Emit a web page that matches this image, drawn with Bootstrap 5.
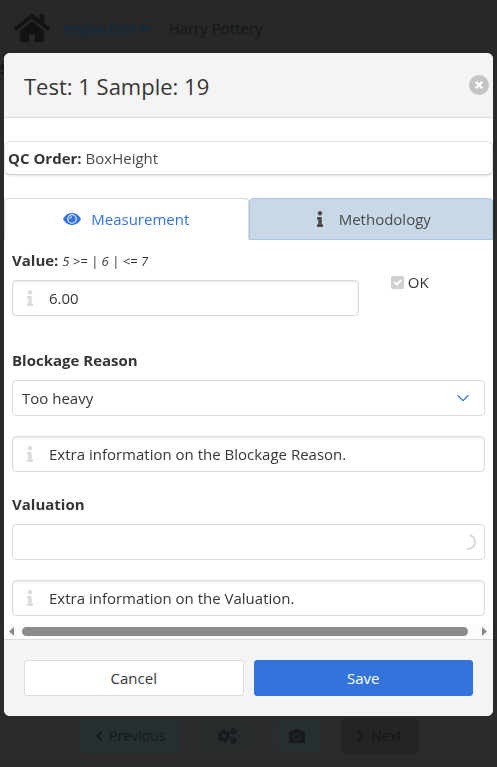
<!DOCTYPE html>
<html lang="en">
<head>
<meta charset="utf-8">
<meta name="viewport" content="width=device-width, initial-scale=1">
<title>Inspection</title>
<link href="https://cdn.jsdelivr.net/npm/bootstrap@5.3.0/dist/css/bootstrap.min.css" rel="stylesheet">
<style>
  body { font-family: "Open Sans", "Noto Sans", sans-serif; font-size: 15px; line-height: 24px; color: #363636; background: #2b2b2b; }
  svg { display: block; flex: none; }
  /* dimmed page behind the dialog */
  .page { min-height: 100vh; overflow: hidden; color: #151515; }
  .topbar { height: 56px; background: #262829; gap: 13px; padding: 0 14px; color: #121414; }
  .topbar a { color: #0d2a42; }
  .topbar .user { color: #151617; margin-left: 6px; }
  .sample-head { height: 26px; background: #262829; }
  .actions { gap: 20px; padding: 13px 0; }
  .actions button { height: 36px; border: 0; border-radius: 4px; font-size: 14px; background: #272e30; color: #151a1c; padding: 0 16px; gap: 6px; }
  .actions .go-next { background: #242424; color: #161616; }
  .actions .tool { height: 32px; }
  .actions .gears { background: #282b2b; }
  /* dialog */
  .modal-dialog { margin: 53px 4px; max-width: none; }
  .modal-content { border: 0; border-radius: 6px; overflow: hidden; color: #363636; }
  .modal-header { background: #f4f4f4; border-bottom: 1px solid #dbdbdb; height: 65px; padding: 0 4px 0 20px; border-radius: 0; }
  .modal-title { font-size: 22px; line-height: 32px; font-weight: 400; padding-top: 2px; }
  .closer { width: 20px; height: 20px; border: 0; border-radius: 50%; background: #c4c4c4; color: #fff; }
  .modal-body { padding: 23px 0 0; }
  .order-box { border: 1px solid #e2e2e2; border-bottom-color: #cfcfcf; border-radius: 6px; box-shadow: 0 1px 3px rgba(10,10,10,.12); height: 34px; padding: 0 3px; margin-bottom: 23px; color: #4a4a4a; }
  .order-box strong { color: #363636; }
  .nav-tabs { border: 0; }
  .nav-tabs .nav-link { height: 42px; margin: 0; padding: 0; gap: 10px; border: 1px solid #dbdbdb; border-bottom-color: transparent; border-radius: 4px 4px 0 0; color: #3273dc; }
  .nav-tabs .nav-link.active { color: #3273dc; border-color: #dbdbdb #dbdbdb transparent; }
  .nav-tabs .other, .nav-tabs .other:hover { background: #c8d8e7; border-color: #a9c6e2; color: #4a4a4a; }
  .pane { padding: 8px 8px; }
  .field-label { font-weight: 700; height: 24px; margin: 0 0 8px; display: block; }
  .range { font-size: 13px; font-weight: 400; }
  .icon-field, .pick { position: relative; }
  .icon-field svg { position: absolute; left: 14px; top: 10px; color: #dbdbdb; }
  .icon-field .form-control { padding: 0 10px 0 36px; box-shadow: inset 0 1px 2px rgba(10,10,10,.1); }
  .form-control, .form-select { height: 36px; font-size: 15px; line-height: 24px; border: 1px solid #dbdbdb; border-radius: 4px; color: #363636; background-color: #fff; }
  .form-select, .form-select:disabled { padding: 0 32px 0 9px; background: #fff; }
  .pick svg { position: absolute; right: 16px; top: 12px; pointer-events: none; }
  .pick .loader { right: 9px; top: 10px; }
  .ok-col { width: 25%; padding-left: 24px; padding-top: 22px; }
  .form-check-input.ok { width: 13px; height: 13px; margin: 0; border: 0; border-radius: 2px; background-color: #cfcfcf; opacity: 1; }
  .form-check-input.ok:disabled ~ label { opacity: 1; }
  .scroller { height: 15px; background: #fcfcfc; padding: 0 6px 0 5px; color: #8b8b8b; }
  .scroller .thumb { height: 9px; border-radius: 5px; background: #8b8b8b; margin: 0 14px 0 8px; }
  .modal-footer { background: #f4f4f4; border-top: 1px solid #dbdbdb; padding: 20px; gap: 10px; border-radius: 0; }
  .modal-footer .btn { height: 36px; padding: 0; margin: 0; border-radius: 3px; font-size: 15px; line-height: 24px; flex: 1 1 0; }
  .btn-plain, .btn-plain:hover { background: #fff; border-color: #dbdbdb; color: #363636; }
  .btn-save, .btn-save:hover { background: #3273dc; border-color: #3273dc; color: #fff; }
</style>
</head>
<body>
<svg class="d-none" aria-hidden="true">
  <symbol id="info" viewBox="0 0 192 512"><path fill="currentColor" d="M20 424.229h20V279.771H20c-11.046 0-20-8.954-20-20V212c0-11.046 8.954-20 20-20h112c11.046 0 20 8.954 20 20v212.229h20c11.046 0 20 8.954 20 20V492c0 11.046-8.954 20-20 20H20c-11.046 0-20-8.954-20-20v-47.771c0-11.046 8.954-20 20-20zM96 0C56.235 0 24 32.235 24 72s32.235 72 72 72 72-32.235 72-72S135.764 0 96 0z"/></symbol>
</svg>

<div class="page d-flex flex-column">
  <nav class="topbar d-flex align-items-center">
    <svg width="36" height="32" viewBox="0 0 576 512" fill="currentColor" aria-hidden="true"><path d="M280.37 148.26L96 300.11V464a16 16 0 0 0 16 16l112.06-.29a16 16 0 0 0 15.92-16V368a16 16 0 0 1 16-16h64a16 16 0 0 1 16 16v95.64a16 16 0 0 0 16 16.05L464 480a16 16 0 0 0 16-16V300L295.67 148.26a12.19 12.19 0 0 0-15.3 0zM571.6 251.47L488 182.56V44.05a12 12 0 0 0-12-12h-56a12 12 0 0 0-12 12v72.61L318.47 43a48 48 0 0 0-61 0L4.34 251.47a12 12 0 0 0-1.6 16.9l25.5 31A12 12 0 0 0 45.15 301l235.22-193.74a12.19 12.19 0 0 1 15.3 0L530.9 301a12 12 0 0 0 16.9-1.6l25.5-31a12 12 0 0 0-1.7-16.93z"/></svg>
    <a href="#" class="d-flex align-items-center text-decoration-none gap-1">Inspection
      <svg width="10" height="8" viewBox="0 0 10 8" fill="none" stroke="currentColor" stroke-width="2.4" stroke-linecap="round" stroke-linejoin="round" aria-hidden="true"><path d="M1.4 2 5 5.6 8.6 2"/></svg></a>
    <span class="user">Harry Pottery</span>
  </nav>
  <div class="sample-head fw-bold">S</div>
  <div class="flex-grow-1"></div>
  <div class="actions d-flex justify-content-center align-items-center">
    <button type="button" class="d-flex align-items-center"><svg width="8" height="12" viewBox="0 0 8 12" fill="none" stroke="currentColor" stroke-width="2.4" aria-hidden="true"><path d="M6.8 1.5 2.2 6l4.6 4.5"/></svg>Previous</button>
    <button type="button" class="tool gears d-flex align-items-center" aria-label="Settings"><svg width="20" height="16" viewBox="0 0 20 16" fill="none" stroke="currentColor" aria-hidden="true"><circle cx="7" cy="8" r="3.6" stroke-width="3"/><circle cx="7" cy="8" r="5.8" stroke-width="2" stroke-dasharray="3 3.07"/><circle cx="16.5" cy="3.4" r="1.9" stroke-width="1.6"/><circle cx="16.5" cy="3.4" r="2.9" stroke-width="1" stroke-dasharray="1.5 1.54"/><circle cx="16.5" cy="12.6" r="1.9" stroke-width="1.6"/><circle cx="16.5" cy="12.6" r="2.9" stroke-width="1" stroke-dasharray="1.5 1.54"/></svg></button>
    <button type="button" class="tool d-flex align-items-center" aria-label="Camera"><svg width="16" height="14" viewBox="0 0 16 14" aria-hidden="true"><path fill="currentColor" fill-rule="evenodd" d="M1.5 2h3l.6-1.4A1 1 0 0 1 6 0h4a1 1 0 0 1 .9.6L11.5 2h3A1.5 1.5 0 0 1 16 3.5v9a1.5 1.5 0 0 1-1.5 1.5h-13A1.5 1.5 0 0 1 0 12.5v-9A1.5 1.5 0 0 1 1.5 2zM8 4a3.8 3.8 0 1 0 0 7.6A3.8 3.8 0 0 0 8 4zm0 1.1a2.7 2.7 0 1 1 0 5.4 2.7 2.7 0 0 1 0-5.4z"/></svg></button>
    <button type="button" class="go-next d-flex align-items-center"><svg width="8" height="12" viewBox="0 0 8 12" fill="none" stroke="currentColor" stroke-width="2.4" aria-hidden="true"><path d="M1.2 1.5 5.8 6l-4.6 4.5"/></svg>Next</button>
  </div>
</div>

<div class="modal d-block" role="dialog" aria-modal="true" aria-labelledby="dialog-title">
  <div class="modal-dialog">
    <form class="modal-content">
      <div class="modal-header">
        <h1 class="modal-title" id="dialog-title">Test: 1 Sample: 19</h1>
        <button type="button" class="closer p-0 d-flex align-items-center justify-content-center" aria-label="Close"><svg width="8" height="8" viewBox="0 0 8 8" stroke="currentColor" stroke-width="2.4" aria-hidden="true"><path d="M.8.8l6.4 6.4M7.2.8.8 7.2"/></svg></button>
      </div>
      <div class="modal-body">
        <div class="order-box d-flex align-items-center gap-1"><strong>QC Order:</strong> <span>BoxHeight</span></div>
        <ul class="nav nav-tabs nav-justified" role="tablist">
          <li class="nav-item" role="presentation"><button type="button" role="tab" aria-selected="true" class="nav-link active d-flex align-items-center justify-content-center">
            <svg width="18" height="14" viewBox="0 0 18 14" aria-hidden="true"><path fill="currentColor" d="M0 7C1.900 3.300 5.200 1 9 1s7.100 2.300 9 6c-1.900 3.700-5.200 6-9 6S1.900 10.700 0 7z"/><circle cx="9" cy="7" r="4.200" fill="none" stroke="#fff" stroke-width="1.100"/><path d="M6.800 7A2.200 2.200 0 0 1 9 4.800" fill="none" stroke="#fff" stroke-width="1"/></svg>Measurement</button></li>
          <li class="nav-item" role="presentation"><button type="button" role="tab" aria-selected="false" class="nav-link other d-flex align-items-center justify-content-center">
            <svg width="18" height="16" aria-hidden="true"><use href="#info"/></svg>Methodology</button></li>
        </ul>
        <div class="pane" role="tabpanel">
          <div class="d-flex gap-2 mb-4 pb-2">
            <div class="flex-grow-1">
              <label class="field-label" for="value">Value: <em class="range">5 &gt;= | 6 | &lt;= 7</em></label>
              <div class="icon-field"><svg width="8" height="16" aria-hidden="true"><use href="#info"/></svg><input class="form-control" id="value" type="text" value="6.00"></div>
            </div>
            <div class="ok-col d-flex align-items-start"><div class="d-flex align-items-center gap-1"><input class="form-check-input ok" type="checkbox" id="ok" checked disabled><label for="ok">OK</label></div></div>
          </div>
          <label class="field-label" for="reason">Blockage Reason</label>
          <div class="pick"><select class="form-select" id="reason"><option>Too heavy</option></select>
            <svg width="12" height="12" viewBox="0 0 12 12" fill="none" stroke="#3273dc" stroke-width="1.3" aria-hidden="true"><path d="M.6 3.2 6 8.600l5.400-5.400"/></svg></div>
          <div class="my-3 py-1"><div class="icon-field"><svg width="8" height="16" aria-hidden="true"><use href="#info"/></svg><input class="form-control" type="text" aria-label="Extra information on the Blockage Reason" value="Extra information on the Blockage Reason."></div></div>
          <label class="field-label" for="valuation">Valuation</label>
          <div class="pick"><select class="form-select" id="valuation" disabled><option></option></select>
            <svg class="loader" width="16" height="16" viewBox="0 0 16 16" fill="none" stroke="#dbdbdb" stroke-width="2" aria-hidden="true"><path d="M9.500 1A7 7 0 0 1 6.500 14.900"/></svg></div>
          <div class="mt-3 pt-1"><div class="icon-field"><svg width="8" height="16" aria-hidden="true"><use href="#info"/></svg><input class="form-control" type="text" aria-label="Extra information on the Valuation" value="Extra information on the Valuation."></div></div>
        </div>
        <div class="scroller d-flex align-items-center" aria-hidden="true">
          <svg width="5" height="9" viewBox="0 0 5 9" fill="currentColor"><path d="M5 0v9L0 4.500z"/></svg>
          <div class="thumb flex-grow-1"></div>
          <svg width="5" height="9" viewBox="0 0 5 9" fill="currentColor"><path d="M0 0v9l5-4.500z"/></svg>
        </div>
      </div>
      <div class="modal-footer flex-nowrap">
        <button type="button" class="btn btn-plain">Cancel</button>
        <button type="submit" class="btn btn-save">Save</button>
      </div>
    </form>
  </div>
</div>
<script src="https://cdn.jsdelivr.net/npm/bootstrap@5.3.0/dist/js/bootstrap.bundle.min.js"></script>
</body>
</html>
